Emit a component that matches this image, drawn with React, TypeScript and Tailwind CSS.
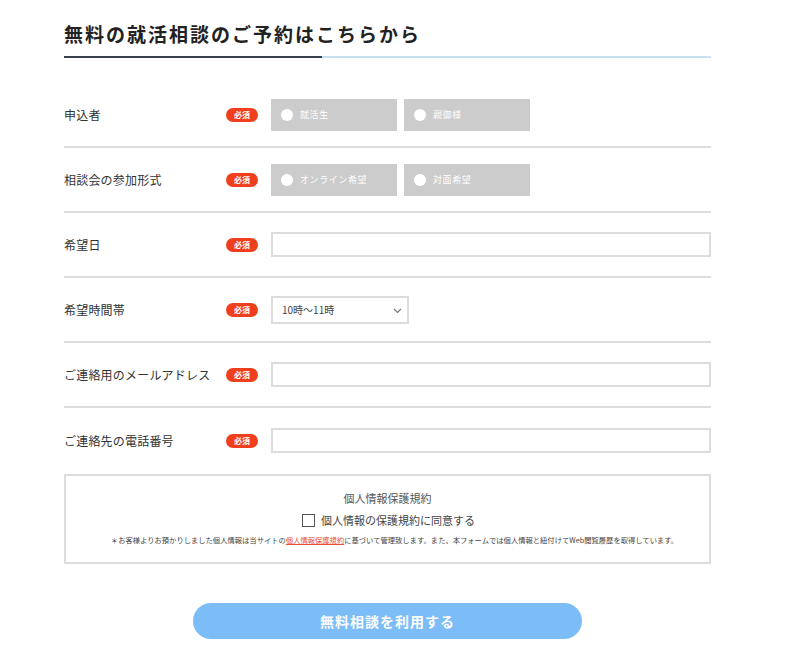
import React from "react";

const font = { fontFamily: '"Noto Sans CJK JP", "Noto Sans", sans-serif' };

const Badge = () => (
  <span className="flex items-center justify-center w-[32px] h-[14px] rounded-full bg-[#ef3f1d] text-white text-[8px] font-bold leading-none">
    必須
  </span>
);

const Radio = ({ label }: { label: string }) => (
  <label className="flex items-center w-[126px] h-[32px] bg-[#cccccc] pl-[10px] gap-[7px]">
    <span className="w-[12px] h-[12px] rounded-full bg-white" />
    <span className="text-[9px] text-white tracking-[0.6px]">{label}</span>
  </label>
);

const Row = ({
  label,
  last,
  children,
}: {
  label: string;
  last?: boolean;
  children: React.ReactNode;
}) => (
  <div
    className={
      "flex items-center h-[65px] " + (last ? "" : "border-b-2 border-[#dddddd]")
    }
  >
    <div className="w-[162px] text-[12px] text-[#333] tracking-[0.2px]">{label}</div>
    <Badge />
    <div className="ml-[13px] flex-1 flex items-center">{children}</div>
  </div>
);

const TextInput = () => (
  <input type="text" className="w-[440px] h-[25px] border-2 border-[#dddddd] bg-white" />
);

export default function App() {
  return (
    <div className="min-h-[665px] bg-white" style={font}>
      <div className="ml-[64px] w-[647px] pt-[20px]">
        <h2 className="text-[19px] font-bold text-[#222] tracking-[2px] leading-[28px]">
          無料の就活相談のご予約はこちらから
        </h2>
        <div className="mt-[8px] flex h-[2px]">
          <div className="w-[258px] bg-[#37404c]" />
          <div className="flex-1 bg-[#c9dff2]" />
        </div>

        <div className="mt-[25px]">
          <Row label="申込者">
            <div className="flex gap-[7px]">
              <Radio label="就活生" />
              <Radio label="親御様" />
            </div>
          </Row>
          <Row label="相談会の参加形式">
            <div className="flex gap-[7px]">
              <Radio label="オンライン希望" />
              <Radio label="対面希望" />
            </div>
          </Row>
          <Row label="希望日">
            <TextInput />
          </Row>
          <Row label="希望時間帯">
            <div className="relative w-[138px] h-[28px] border-2 border-[#dddddd] bg-white flex items-center pl-[9px]">
              <span className="text-[10px] text-[#444]">10時〜11時</span>
              <svg
                className="absolute right-[5px] top-[10px]"
                width="9"
                height="6"
                viewBox="0 0 9 6"
                fill="none"
                stroke="#777"
                strokeWidth="1.2"
              >
                <path d="M1 1l3.5 3.5L8 1" />
              </svg>
            </div>
          </Row>
          <Row label="ご連絡用のメールアドレス">
            <TextInput />
          </Row>
          <Row label="ご連絡先の電話番号" last>
            <TextInput />
          </Row>
        </div>

        <div className="mt-[1px] border-2 border-[#dddddd] h-[90px] flex flex-col items-center pt-[14px]">
          <div className="text-[11px] text-[#555] leading-[16px]">個人情報保護規約</div>
          <label className="mt-[6px] flex items-center gap-[6px] pl-[2px]">
            <span className="w-[13px] h-[13px] border border-[#555] bg-white" />
            <span className="text-[11px] text-[#444] leading-[16px]">
              個人情報の保護規約に同意する
            </span>
          </label>
          <p className="mt-[6px] pl-[14px] text-[7.3px] text-[#444] leading-[12px]">
            ＊お客様よりお預かりしました個人情報は当サイトの
            <a className="text-[#e8503a] underline">個人情報保護規約</a>
            に基づいて管理致します。また、本フォームでは個人情報と紐付けてWeb閲覧履歴を取得しています。
          </p>
        </div>

        <div className="mt-[39px] flex justify-center">
          <button className="w-[389px] h-[36px] rounded-full bg-[#7dbdf7] text-white text-[14px] font-bold tracking-[1px]">
            無料相談を利用する
          </button>
        </div>
      </div>
    </div>
  );
}
